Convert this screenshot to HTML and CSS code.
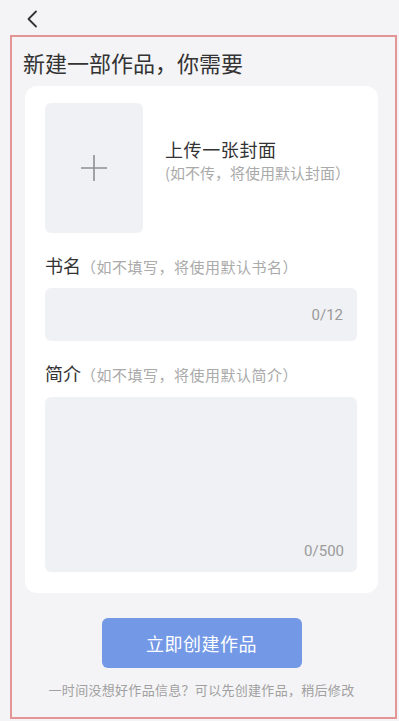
FILE: index.html
```html
<!DOCTYPE html>
<html lang="zh-CN">
<head>
    <meta charset="UTF-8">
    <meta name="viewport" content="width=device-width, initial-scale=1.0">
    <title>新建作品</title>
    <link rel="stylesheet" href="styles.css">
</head>
<body>

    <!-- 顶部返回 -->
    <header class="top-bar">
        <svg class="back-icon" width="12" height="18" viewBox="0 0 12 18">
            <path d="M10 1.5 L2.5 9 L10 16.5" fill="none" stroke="#333" stroke-width="1.8" stroke-linecap="round" stroke-linejoin="round"/>
        </svg>
    </header>

    <main class="frame">
        <h1 class="page-title">新建一部作品，你需要</h1>

        <div class="card">
            <!-- 封面 -->
            <div class="cover-row">
                <div class="cover-box">
                    <svg width="28" height="28" viewBox="0 0 28 28">
                        <path d="M14 1 V27 M1 14 H27" stroke="#8e8e93" stroke-width="1.6"/>
                    </svg>
                </div>
                <div class="cover-text">
                    <div class="cover-title">上传一张封面</div>
                    <div class="cover-sub">(如不传，将使用默认封面）</div>
                </div>
            </div>

            <!-- 书名 -->
            <div class="field-label">书名<span class="hint">（如不填写，将使用默认书名）</span></div>
            <div class="input-box">
                <span class="count">0/12</span>
            </div>

            <!-- 简介 -->
            <div class="field-label">简介<span class="hint">（如不填写，将使用默认简介）</span></div>
            <div class="textarea-box">
                <span class="count">0/500</span>
            </div>
        </div>

        <button class="create-btn">立即创建作品</button>
        <p class="tip">一时间没想好作品信息？可以先创建作品，稍后修改</p>
    </main>

</body>
</html>
```

FILE: styles.css
```css
body {
    margin: 0;
    padding: 0;
    background-color: #f4f4f6;
    font-family: "Noto Sans CJK SC", "Noto Sans", sans-serif;
    color: #333;
}

.top-bar {
    height: 35px;
    display: flex;
    align-items: center;
    padding-left: 26px;
}

.back-icon {
    display: block;
    margin-top: 2px;
}

.frame {
    margin: 0 2px 0 10px;
    border: 2px solid #e39595;
    padding: 10px 17px 17px 13px;
}

.page-title {
    margin: 0 0 9px -2px;
    font-size: 22px;
    line-height: 30px;
    font-weight: normal;
    color: #333;
}

.card {
    background-color: #fff;
    border-radius: 12px;
    padding: 17px 21px 21px 20px;
}

.cover-row {
    display: flex;
    gap: 22px;
}

.cover-box {
    width: 98px;
    height: 130px;
    background-color: #f0f1f4;
    border-radius: 6px;
    display: flex;
    align-items: center;
    justify-content: center;
}

.cover-text {
    padding-top: 34px;
}

.cover-title {
    font-size: 18px;
    line-height: 24px;
    color: #333;
    letter-spacing: 0.6px;
}

.cover-sub {
    margin-top: 2px;
    font-size: 15px;
    line-height: 20px;
    color: #aaa;
}

.field-label {
    margin-top: 20px;
    font-size: 18px;
    line-height: 24px;
    color: #333;
}

.hint {
    font-size: 15px;
    line-height: 1;
    color: #aaa;
    letter-spacing: 0.5px;
}

.input-box {
    margin-top: 11px;
    height: 53px;
    background-color: #f0f1f4;
    border-radius: 6px;
    display: flex;
    align-items: center;
    justify-content: flex-end;
    padding-right: 14px;
}

.textarea-box {
    margin-top: 12px;
    height: 175px;
    background-color: #f0f1f4;
    border-radius: 6px;
    display: flex;
    align-items: flex-end;
    justify-content: flex-end;
    padding: 0 13px 11px 0;
    box-sizing: border-box;
}

.count {
    font-family: "Roboto", "Noto Sans", sans-serif;
    font-size: 15px;
    line-height: 20px;
    color: #9a9a9a;
}

.create-btn {
    display: block;
    margin: 25px auto 0;
    width: 200px;
    height: 50px;
    border: none;
    border-radius: 6px;
    background-color: #7399e6;
    color: #fff;
    font-family: inherit;
    font-size: 18px;
    letter-spacing: 0.5px;
}

.tip {
    margin: 12px 0 0;
    text-align: center;
    font-size: 13px;
    line-height: 20px;
    color: #a0a0a0;
    letter-spacing: 0.3px;
}
```
